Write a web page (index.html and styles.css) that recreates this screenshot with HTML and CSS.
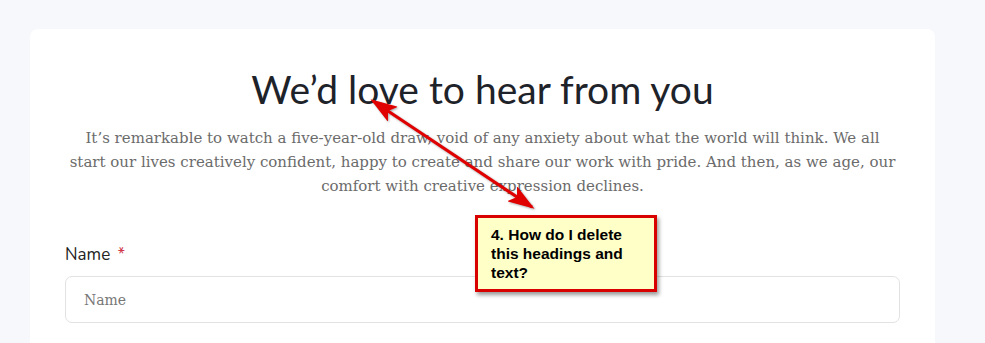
FILE: index.html
```html
<!DOCTYPE html>
<html lang="en">
<head>
    <meta charset="UTF-8">
    <meta name="viewport" content="width=device-width, initial-scale=1.0">
    <title>Contact</title>
    <link rel="stylesheet" href="styles.css">
</head>
<body>
    <div class="card">
        <h1 class="title">We’d love to hear from you</h1>
        <p class="intro">It’s remarkable to watch a five-year-old draw, void of any anxiety about what the world will think. We all start our lives creatively confident, happy to create and share our work with pride. And then, as we age, our comfort with creative expression declines.</p>

        <div class="field">
            <label class="label" for="name">Name <span class="req">*</span></label>
            <input type="text" id="name" class="input" placeholder="Name" />
        </div>
    </div>

    <svg class="arrow" width="985" height="343" viewBox="0 0 985 343">
        <defs>
            <marker id="head" markerWidth="9" markerHeight="6" refX="8" refY="3" orient="auto-start-reverse" markerUnits="strokeWidth">
                <path d="M0 0 L9 3 L0 6 L2 3 Z" fill="#e00000" />
            </marker>
        </defs>
        <line x1="373" y1="101" x2="532" y2="207" stroke="#e00000" stroke-width="3" marker-start="url(#head)" marker-end="url(#head)" />
    </svg>

    <div class="note">4. How do I delete this headings and text?</div>
</body>
</html>
```

FILE: styles.css
```css
body {
    margin: 0;
    padding: 29px 50px 0 30px;
    background-color: #f7f8fc;
    height: 100vh;
    box-sizing: border-box;
    overflow: hidden;
    position: relative;
}

.card {
    background-color: #fff;
    border-radius: 8px 8px 0 0;
    padding: 33px 35px 0;
    height: 100%;
    box-sizing: border-box;
}

.title {
    margin: 0;
    text-align: center;
    font-family: "Lato", sans-serif;
    font-weight: 400;
    font-size: 39px;
    line-height: 54px;
    color: #1e2229;
}

.intro {
    max-width: 831px;
    margin: 10px auto 0;
    text-align: center;
    font-family: "DejaVu Serif", serif;
    font-size: 15px;
    line-height: 24px;
    color: #6b6b6b;
}

.field {
    margin-top: 45px;
}

.label {
    display: block;
    font-family: "Nunito", "Noto Sans", sans-serif;
    font-size: 17px;
    color: #222;
    margin-bottom: 10px;
}

.req {
    color: #d0384a;
    margin-left: 3px;
}

.input {
    display: block;
    width: 100%;
    box-sizing: border-box;
    height: 47px;
    border: 1px solid #e2e2e2;
    border-radius: 7px;
    padding: 0 18px;
    font-family: "DejaVu Serif", serif;
    font-size: 14px;
}

.input::placeholder {
    color: #777;
}

.arrow {
    position: absolute;
    top: 0;
    left: 0;
    filter: drop-shadow(1px 1px 1px rgba(0, 0, 0, 0.35));
}

.note {
    position: absolute;
    top: 215px;
    left: 475px;
    width: 182px;
    height: 77px;
    box-sizing: border-box;
    border: 3px solid #d90000;
    background-color: #ffffc8;
    padding: 7px 20px 0 13px;
    font-family: "Liberation Sans", Arial, sans-serif;
    font-weight: bold;
    font-size: 15.5px;
    line-height: 19px;
    color: #000;
    box-shadow: 2px 3px 4px rgba(0, 0, 0, 0.4);
}
```
